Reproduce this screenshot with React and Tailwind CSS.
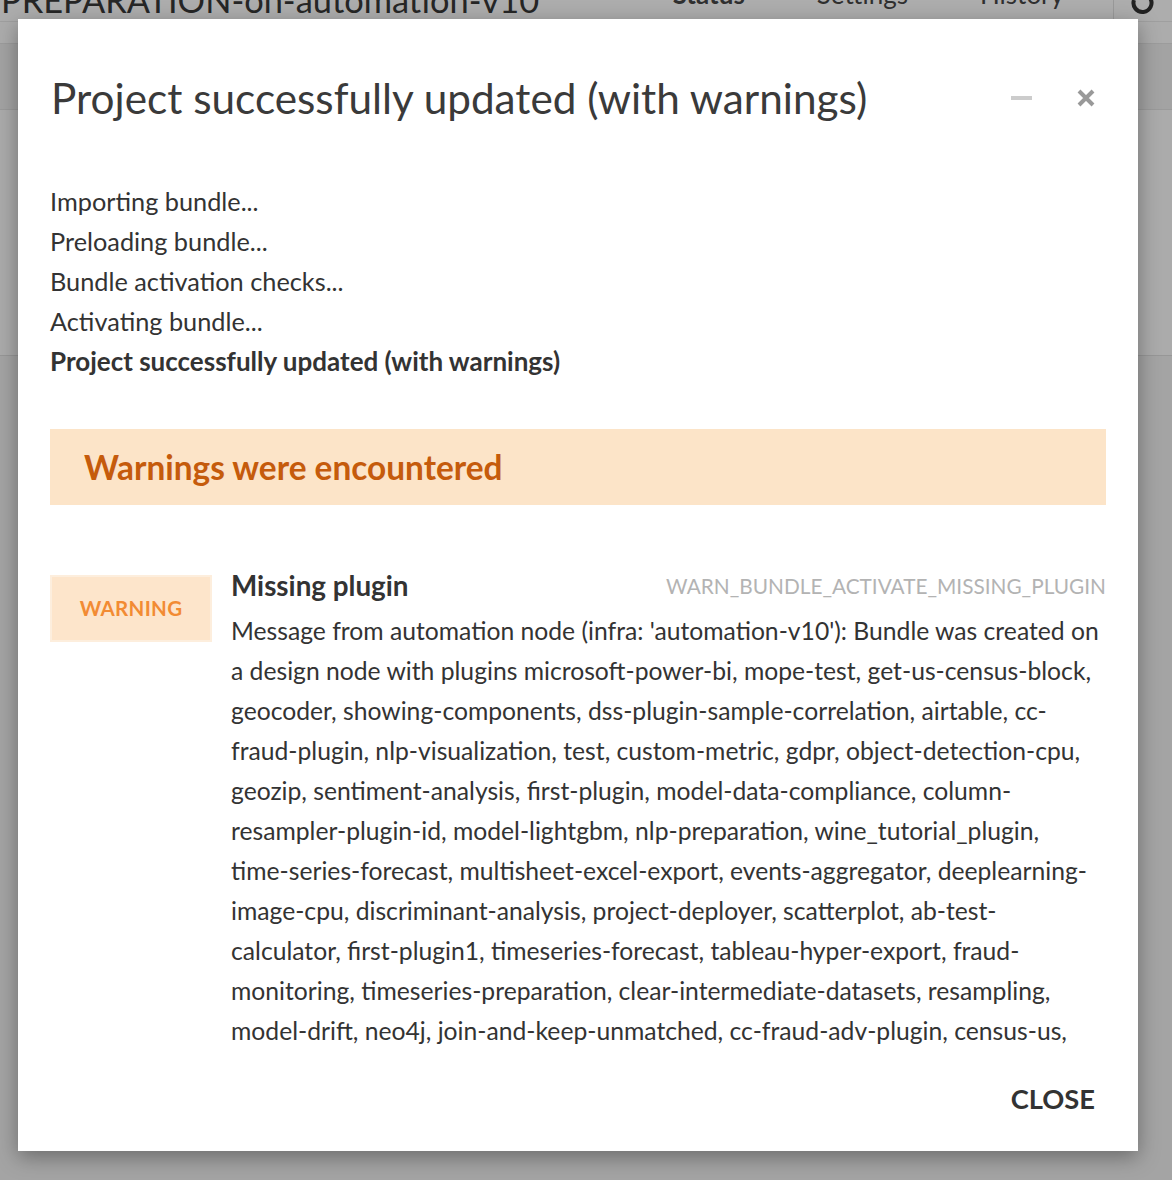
import React from "react";

const lines = [
  "Message from automation node (infra: 'automation-v10'): Bundle was created on",
  "a design node with plugins microsoft-power-bi, mope-test, get-us-census-block,",
  "geocoder, showing-components, dss-plugin-sample-correlation, airtable, cc-",
  "fraud-plugin, nlp-visualization, test, custom-metric, gdpr, object-detection-cpu,",
  "geozip, sentiment-analysis, first-plugin, model-data-compliance, column-",
  "resampler-plugin-id, model-lightgbm, nlp-preparation, wine_tutorial_plugin,",
  "time-series-forecast, multisheet-excel-export, events-aggregator, deeplearning-",
  "image-cpu, discriminant-analysis, project-deployer, scatterplot, ab-test-",
  "calculator, first-plugin1, timeseries-forecast, tableau-hyper-export, fraud-",
  "monitoring, timeseries-preparation, clear-intermediate-datasets, resampling,",
  "model-drift, neo4j, join-and-keep-unmatched, cc-fraud-adv-plugin, census-us,",
  "geoip, text-analysis, deep-learning-images, pivot-export",
];

export default function App() {
  return (
    <div
      className="relative w-[1172px] h-[1180px] overflow-hidden bg-[#a4a4a4] text-[#333]"
      style={{ fontFamily: "Lato, 'Noto Sans', sans-serif" }}
    >
      {/* background page (under overlay) */}
      <div className="flex flex-col">
        <div className="h-[22px] bg-[#adadad] border-b border-[#9f9f9f] flex items-end overflow-hidden">
          <div className="text-[34.4px] leading-none text-[#262626] pl-[1px] mb-[4px] whitespace-nowrap">
            PREPARATION-on-automation-v10
          </div>
          <div className="ml-auto flex items-end h-full">
            <span className="text-[26px] leading-none font-bold text-[#303030] mr-[72px] mb-[14px]">Status</span>
            <span className="text-[26px] leading-none text-[#303030] mr-[72px] mb-[14px]">Settings</span>
            <span className="text-[26px] leading-none text-[#303030] mr-[49px] mb-[14px]">History</span>
            <div className="w-[59px] h-full border-l border-[#999] flex items-start justify-center">
              <svg width="30" height="20" viewBox="0 0 30 20" className="-mt-[6px]">
                <path d="M6 6 A9 9 0 1 0 22 4" fill="none" stroke="#222" strokeWidth="4" />
              </svg>
            </div>
          </div>
        </div>
        <div className="h-[22px] bg-[#acacac] border-b border-[#9c9c9c]" />
        <div className="h-[66px] bg-[#a3a3a3] border-b border-[#9a9a9a]" />
        <div className="h-[246px] bg-[#ababab] border-b border-[#979797]" />
        <div className="flex-1 bg-[#a3a3a3]" />
      </div>

      {/* modal */}
      <div className="absolute left-[18px] top-[19px] w-[1120px] h-[1132px] bg-white shadow-[0_6px_20px_rgba(0,0,0,0.35)] flex flex-col">
        <div className="pt-[55px] pl-[33px] pr-[42px] flex items-center justify-between">
          <h1 className="text-[42.3px] leading-[48px] text-[#3a3a3a] whitespace-nowrap">
            Project successfully updated (with warnings)
          </h1>
          <div className="flex items-center">
            <div className="w-[21px] h-[4px] bg-[#cccccc]" />
            <svg width="20" height="20" viewBox="0 0 20 20" className="ml-[44px]">
              <path d="M3 3 L17 17 M17 3 L3 17" stroke="#999" strokeWidth="4" strokeLinecap="butt" />
            </svg>
          </div>
        </div>

        <div className="h-[931px] overflow-hidden pl-[32px] pr-[32px]">
          <div className="pt-[59px] text-[25.3px] leading-[40px] text-[#333]">
            <div>Importing bundle...</div>
            <div>Preloading bundle...</div>
            <div>Bundle activation checks...</div>
            <div>Activating bundle...</div>
            <div className="font-bold text-[26px]">Project successfully updated (with warnings)</div>
          </div>

          <div className="mt-[48px] h-[76px] bg-[#fce4c8] pl-[34px] flex items-center">
            <span className="text-[33.4px] font-bold text-[#c55b0c]">Warnings were encountered</span>
          </div>

          <div className="mt-[61px] flex">
            <div className="mt-[9px] w-[162px] h-[67px] shrink-0 bg-[#fde5cb] border-2 border-[#fdeedd] flex items-center justify-center">
              <span className="text-[20.5px] font-bold text-[#f28b33] tracking-[0.3px]">WARNING</span>
            </div>
            <div className="ml-[19px] flex-1 min-w-0">
              <div className="h-[40px] flex items-center justify-between">
                <span className="text-[27.8px] font-bold text-[#333]">Missing plugin</span>
                <span className="text-[20.8px] text-[#b3b3b3]">WARN_BUNDLE_ACTIVATE_MISSING_PLUGIN</span>
              </div>
              <div className="mt-[5px] text-[24.7px] leading-[40px] text-[#333]">
                {lines.map((l, i) => (
                  <div key={i} className="whitespace-nowrap">{l}</div>
                ))}
              </div>
            </div>
          </div>
        </div>

        <div className="flex-1 flex justify-end items-start pr-[43px] pt-[31px]">
          <span className="text-[27.3px] font-bold text-[#333] leading-[30px]">CLOSE</span>
        </div>
      </div>
    </div>
  );
}
